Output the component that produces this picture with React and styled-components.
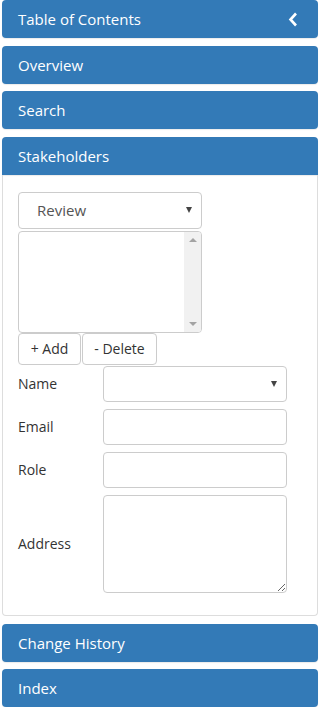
import React from 'react';
import styled, { createGlobalStyle } from 'styled-components';

const GlobalStyle = createGlobalStyle`
  body {
    margin: 0;
    background: #fff;
    font-family: "Open Sans", "Noto Sans", sans-serif;
    color: #333;
  }
`;

const Sidebar = styled.div`
  padding: 0 2px;
  display: flex;
  flex-direction: column;
  gap: 7.67px;
`;

const Section = styled.div`
  display: flex;
  flex-direction: column;
`;

const Heading = styled.div`
  height: 38px;
  box-sizing: border-box;
  background: #337ab7;
  color: #fff;
  font-size: 15px;
  padding: 0 20px 0 16px;
  display: flex;
  align-items: center;
  justify-content: space-between;
  border-radius: ${p => (p.open ? '4px 4px 0 0' : '4px')};
  box-shadow: 0 1px 1px rgba(0, 0, 0, 0.08);
`;

const Body = styled.div`
  border: 1px solid #ddd;
  border-top: none;
  border-radius: 0 0 4px 4px;
  padding: 17px 15px 22px;
  display: flex;
  flex-direction: column;
`;

const Dropdown = styled.div`
  width: ${p => p.width}px;
  height: ${p => p.height}px;
  box-sizing: border-box;
  border: 1px solid #ccc;
  border-radius: 4px;
  display: flex;
  align-items: center;
  justify-content: space-between;
  padding: 0 9px 0 ${p => p.indent}px;
  font-size: 15px;
  color: #555;
`;

const Caret = styled.span`
  width: 0;
  height: 0;
  border-left: 3.5px solid transparent;
  border-right: 3.5px solid transparent;
  border-top: 6px solid #444;
`;

const ListBox = styled.div`
  margin-top: 2px;
  width: 184px;
  height: 102px;
  box-sizing: border-box;
  border: 1px solid #ccc;
  border-radius: 4px;
  display: flex;
  overflow: hidden;
`;

const ListArea = styled.div`
  flex: 1;
`;

const ScrollTrack = styled.div`
  width: 17px;
  background: #f1f1f1;
  display: flex;
  flex-direction: column;
  justify-content: space-between;
  align-items: center;
  padding: 6px 0;
`;

const Arrow = styled.span`
  width: 0;
  height: 0;
  border-left: 4px solid transparent;
  border-right: 4px solid transparent;
  ${p => (p.up ? 'border-bottom: 4px solid #a3a3a3;' : 'border-top: 4px solid #a3a3a3;')}
`;

const ButtonRow = styled.div`
  display: flex;
  gap: 1px;
`;

const Button = styled.button`
  height: 32px;
  width: ${p => p.width}px;
  box-sizing: border-box;
  background: #fff;
  border: 1px solid #ccc;
  border-radius: 4px;
  font-family: "Open Sans", "Noto Sans", sans-serif;
  font-size: 14px;
  color: #333;
  padding: 0;
`;

const Form = styled.div`
  margin-top: 1px;
  display: flex;
  flex-direction: column;
  gap: 7px;
`;

const Row = styled.div`
  display: grid;
  grid-template-columns: 85px 184px;
  align-items: center;
`;

const Label = styled.label`
  font-size: 14px;
  color: #333;
`;

const Input = styled.input`
  height: 36px;
  box-sizing: border-box;
  border: 1px solid #ccc;
  border-radius: 4px;
  margin: 0;
`;

const TextArea = styled.textarea`
  height: 98px;
  box-sizing: border-box;
  border: 1px solid #ccc;
  border-radius: 4px;
  margin: 0;
  resize: vertical;
`;

const Chevron = () => (
  <svg width="10" height="15" viewBox="0 0 10 15">
    <path d="M8 1.5 L2.5 7.5 L8 13.5" fill="none" stroke="#fff" strokeWidth="2.6" />
  </svg>
);

export default function App() {
  return (
    <>
      <GlobalStyle />
      <Sidebar>
        <Heading>
          Table of Contents
          <Chevron />
        </Heading>
        <Heading>Overview</Heading>
        <Heading>Search</Heading>
        <Section>
          <Heading open>Stakeholders</Heading>
          <Body>
            <Dropdown width={184} height={37} indent={18}>
              Review
              <Caret />
            </Dropdown>
            <ListBox>
              <ListArea />
              <ScrollTrack>
                <Arrow up />
                <Arrow />
              </ScrollTrack>
            </ListBox>
            <ButtonRow>
              <Button width={63}>+ Add</Button>
              <Button width={75}>- Delete</Button>
            </ButtonRow>
            <Form>
              <Row>
                <Label>Name</Label>
                <Dropdown width={184} height={36} indent={12}>
                  <span />
                  <Caret />
                </Dropdown>
              </Row>
              <Row>
                <Label>Email</Label>
                <Input />
              </Row>
              <Row>
                <Label>Role</Label>
                <Input />
              </Row>
              <Row>
                <Label>Address</Label>
                <TextArea />
              </Row>
            </Form>
          </Body>
        </Section>
        <Heading>Change History</Heading>
        <Heading>Index</Heading>
      </Sidebar>
    </>
  );
}
